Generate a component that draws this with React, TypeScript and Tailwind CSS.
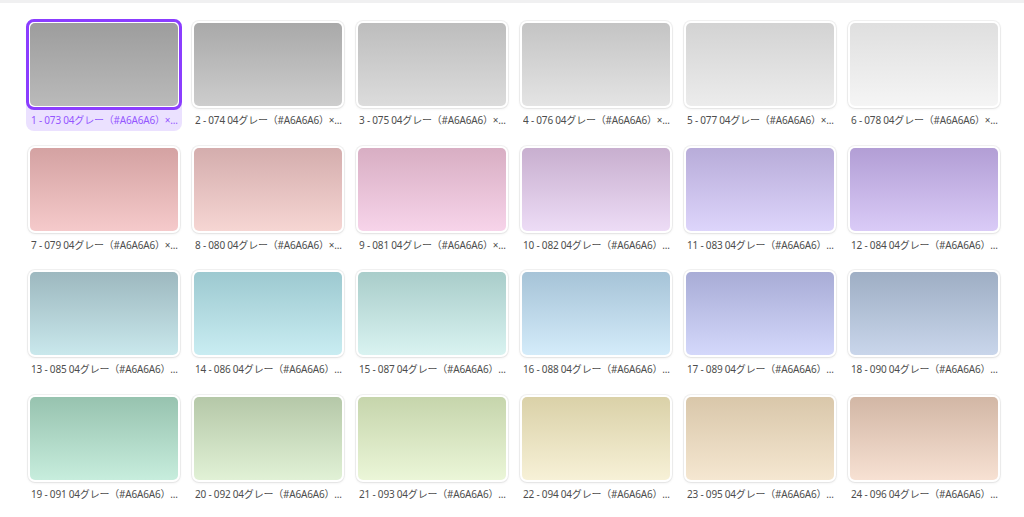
import React from "react";

type Item = { n: number; code: string; grad: string; tail: string };

const items: Item[] = [
  { n: 1, code: "073", grad: "bg-linear-to-b from-[#9d9d9d] to-[#bababa]", tail: "×..." },
  { n: 2, code: "074", grad: "bg-linear-to-b from-[#a9a9a9] to-[#cdcdcd]", tail: "×..." },
  { n: 3, code: "075", grad: "bg-linear-to-b from-[#bdbdbd] to-[#dcdcdc]", tail: "×..." },
  { n: 4, code: "076", grad: "bg-linear-to-b from-[#c4c4c4] to-[#e4e4e4]", tail: "×..." },
  { n: 5, code: "077", grad: "bg-linear-to-b from-[#d3d3d3] to-[#ececec]", tail: "×..." },
  { n: 6, code: "078", grad: "bg-linear-to-b from-[#dfdfdf] to-[#f5f5f5]", tail: "×..." },
  { n: 7, code: "079", grad: "bg-linear-to-b from-[#d4a2a2] to-[#f5cacb]", tail: "×..." },
  { n: 8, code: "080", grad: "bg-linear-to-b from-[#d4adad] to-[#f6d6d3]", tail: "×..." },
  { n: 9, code: "081", grad: "bg-linear-to-b from-[#d8aec3] to-[#f7d4ea]", tail: "×..." },
  { n: 10, code: "082", grad: "bg-linear-to-b from-[#c8afcf] to-[#eddcf6]", tail: "..." },
  { n: 11, code: "083", grad: "bg-linear-to-b from-[#b8acd9] to-[#ddd5fb]", tail: "..." },
  { n: 12, code: "084", grad: "bg-linear-to-b from-[#b29ed5] to-[#dacbf7]", tail: "..." },
  { n: 13, code: "085", grad: "bg-linear-to-b from-[#9db8bf] to-[#c9e8ec]", tail: "..." },
  { n: 14, code: "086", grad: "bg-linear-to-b from-[#9dc9d0] to-[#c9edf2]", tail: "..." },
  { n: 15, code: "087", grad: "bg-linear-to-b from-[#a9cdca] to-[#d9f3f1]", tail: "..." },
  { n: 16, code: "088", grad: "bg-linear-to-b from-[#a6c3d7] to-[#d4ecfa]", tail: "..." },
  { n: 17, code: "089", grad: "bg-linear-to-b from-[#a8acd6] to-[#d4d8fb]", tail: "..." },
  { n: 18, code: "090", grad: "bg-linear-to-b from-[#9eaec4] to-[#c9d6eb]", tail: "..." },
  { n: 19, code: "091", grad: "bg-linear-to-b from-[#97c3af] to-[#c7eddd]", tail: "..." },
  { n: 20, code: "092", grad: "bg-linear-to-b from-[#b5c8a8] to-[#e1f1d6]", tail: "..." },
  { n: 21, code: "093", grad: "bg-linear-to-b from-[#c6d5ac] to-[#ebf6d8]", tail: "..." },
  { n: 22, code: "094", grad: "bg-linear-to-b from-[#dad1a8] to-[#f7f1d7]", tail: "..." },
  { n: 23, code: "095", grad: "bg-linear-to-b from-[#d9c7aa] to-[#f5e7d1]", tail: "..." },
  { n: 24, code: "096", grad: "bg-linear-to-b from-[#d2b7a5] to-[#f7e1d3]", tail: "..." },
];

function Card({ item, selected }: { item: Item; selected: boolean }) {
  return (
    <div className={selected ? "rounded-[8px] bg-[#ebe1ff]" : "rounded-[8px]"}>
      {selected ? (
        <div className="h-[91px] rounded-[8px] border-[3px] border-[#8b3dff] bg-white p-[1px]">
          <div className={`h-full rounded-[5px] ${item.grad}`} />
        </div>
      ) : (
        <div className="h-[91px] p-[2px]">
          <div className="h-full rounded-[7px] bg-white p-[2px] shadow-[0_0_0_1px_rgba(0,0,0,0.05),0_1px_3px_rgba(0,0,0,0.08)]">
            <div className={`h-full rounded-[5px] ${item.grad}`} />
          </div>
        </div>
      )}
      <div
        className={`flex h-[21px] items-center pl-[5px] pr-[2px] text-[10px] tracking-[-0.2px] ${
          selected ? "text-[#9455ff]" : "text-[#4d4d4d]"
        }`}
      >
        <span className="block min-w-0 truncate">{`${item.n} - ${item.code} 04グレー（#A6A6A6）${item.tail}`}</span>
      </div>
    </div>
  );
}

export default function App() {
  return (
    <div
      className="min-h-[517px] w-[1024px] bg-white"
      style={{ fontFamily: '"Noto Sans", "Noto Sans CJK JP", sans-serif' }}
    >
      <div className="h-[3px] bg-[#f0f0f1]" />
      <div className="grid grid-cols-[repeat(6,156px)] gap-x-[8px] gap-y-[12.67px] pl-[26px] pt-[16px]">
        {items.map((it, i) => (
          <Card key={it.n} item={it} selected={i === 0} />
        ))}
      </div>
    </div>
  );
}
